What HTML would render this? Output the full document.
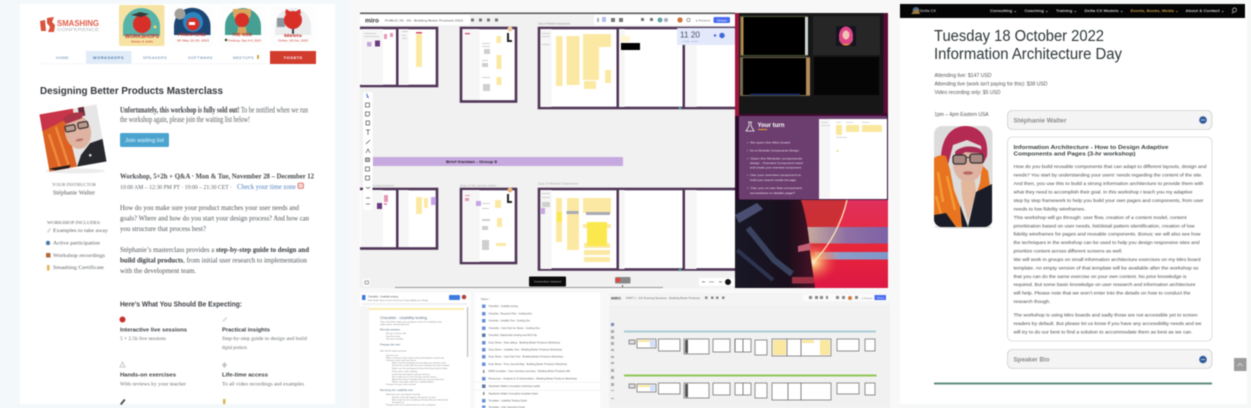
<!DOCTYPE html>
<html><head><meta charset="utf-8"><title>Workshops</title>
<style>
html,body{margin:0;padding:0;background:#f6f8f9;width:1251px;height:408px;overflow:hidden}
svg{display:block;filter:blur(.55px)}
text{white-space:pre}
.s{font-family:"Liberation Sans",sans-serif}
.f{font-family:"Liberation Serif",serif}
</style></head><body>
<svg width="1251" height="408" viewBox="0 0 1251 408" xmlns="http://www.w3.org/2000/svg">
<rect width="1251" height="408" fill="#f6f7f8"/>
<rect x="0" width="350" height="408" fill="#f3f8fa"/>

<!-- LEFT PANEL -->
<rect x="20" y="4" width="315" height="400" fill="#fff"/>
<path d="M40 21l5-1 1 11-5 0zM47 18l7-1-2 5 3 3-1 7-6 0 2-5-3-4z" fill="#d9533d"/>
<text class="s" x="57" y="26" font-size="8" font-weight="700" fill="#e0604c" textLength="42" lengthAdjust="spacingAndGlyphs">SMASHING</text>
<text class="s" x="57" y="31" font-size="4.6" fill="#aab0b5" textLength="42" lengthAdjust="spacingAndGlyphs">CONFERENCE</text>

<!-- card 1 -->
<rect x="119" y="5" width="45.500" height="41" rx="2" fill="#f6e3a4"/>
<path d="M123 36v-9.500a18.500 18.500 0 0 1 37 0v9.500z" fill="#58b3a9"/>
<circle cx="142" cy="24" r="9" fill="#d82f28"/>
<path d="M131 15l9-3 9 2-8 3z" fill="#3a3a3a"/>
<circle cx="155" cy="27" r="1.500" fill="#e8dc6a"/>
<text class="s" x="125" y="38" font-size="5.200" font-weight="700" fill="#c9352c" textLength="34" lengthAdjust="spacingAndGlyphs">WORKSHOPS</text>
<text class="s" x="131" y="42.500" font-size="2.600" fill="#c9352c" textLength="22" lengthAdjust="spacingAndGlyphs">Meets &amp; skills</text>

<!-- card 2 -->
<rect x="170" y="5" width="44" height="41" rx="2" fill="#fdfdfd"/>
<path d="M174 35v-9a18 18 0 0 1 36.500 0v9z" fill="#1c4674"/>
<circle cx="193" cy="22" r="10" fill="#2b86bf"/>
<circle cx="180" cy="14" r="5.500" fill="#a09f98"/>
<circle cx="193" cy="24" r="6.500" fill="#d82f28"/><rect x="189" y="22" width="6" height="3" fill="#fff"/>
<text class="s" x="178" y="36" font-size="4.600" font-weight="700" fill="#c9352c" textLength="28" lengthAdjust="spacingAndGlyphs">FRONTEND</text>
<text class="s" x="177" y="41.500" font-size="2.600" fill="#c9352c" textLength="32" lengthAdjust="spacingAndGlyphs">SF May 22-25, 2023</text>

<!-- card 3 -->
<rect x="220" y="5" width="45" height="41" rx="2" fill="#fdfdfd"/>
<path d="M225 35v-9a18 18 0 0 1 36 0v9z" fill="#459f93"/>
<path d="M233 9h18v6l-3 6h-12l-3-6z" fill="#d9a75f"/>
<circle cx="242" cy="20" r="7" fill="#d82f28"/>
<path d="M238 27h8l1 8h-10z" fill="#d9a75f"/>
<text class="s" x="232" y="36" font-size="4.600" font-weight="700" fill="#c9352c" textLength="20" lengthAdjust="spacingAndGlyphs">THE WEB</text>
<circle cx="226" cy="40" r="1.200" fill="#332"/>
<text class="s" x="228" y="41.500" font-size="2.600" fill="#c9352c" textLength="33" lengthAdjust="spacingAndGlyphs">Freiburg, Sep 4-6, 2023</text>

<!-- card 4 -->
<rect x="270" y="5" width="45" height="41" rx="2" fill="#fdfdfd"/>
<path d="M275 35v-9a18 18 0 0 1 36 0v9z" fill="#eaecee"/>
<rect x="277" y="18" width="8" height="9" fill="#8f979e"/>
<rect x="292" y="27" width="2" height="7" fill="#444"/>
<circle cx="293" cy="20" r="9" fill="#d82f28"/><path d="M285 14l1-5 5 3zM301 14l-1-5-5 3z" fill="#d82f28"/>
<text class="s" x="284" y="37" font-size="4.600" font-weight="700" fill="#c9352c" textLength="18" lengthAdjust="spacingAndGlyphs">Meets</text>
<text class="s" x="278" y="41.500" font-size="2.600" fill="#c9352c" textLength="30" lengthAdjust="spacingAndGlyphs">Online, 18 Oct, 2023</text>

<rect x="40" y="63.500" width="275" height=".6" fill="#eef1f4"/>
<rect x="86" y="51" width="45.500" height="13" fill="#e1ecf8"/>
<rect x="270" y="51" width="46" height="13" fill="#d23c2d"/>
<g class="s" font-size="3.800" letter-spacing=".5" fill="#5d7ea6">
<text x="56" y="59" textLength="13">HOME</text>
<text x="93" y="59" font-weight="700" textLength="31" fill="#4d78ad">WORKSHOPS</text>
<text x="143" y="59" textLength="24">SPEAKERS</text>
<text x="188" y="59" textLength="25">SOFTWARE</text>
<text x="233" y="59" textLength="21">MEETUPS</text>
<text x="283.500" y="59" font-weight="700" fill="#fff" textLength="19">TICKETS</text>
</g>
<rect x="257" y="55" width="2" height="4" fill="#cfa94f"/>

<text class="s" x="40" y="94" font-size="9.800" font-weight="700" fill="#33383d" textLength="183" lengthAdjust="spacingAndGlyphs">Designing Better Products Masterclass</text>

<!-- left portrait -->
<ellipse cx="75" cy="171" rx="30" ry="2.500" fill="#ececec"/>
<g transform="rotate(-10 73 138)">
<clipPath id="lp"><rect x="44" y="109" width="58" height="58"/></clipPath>
<g clip-path="url(#lp)">
<rect x="44" y="109" width="58" height="58" fill="#e6e6e6"/>
<path d="M44 109h34v16l-8 12 2 30H44z" fill="#dc6223"/>
<path d="M44 109h34l-2 7-12 4-20 6z" fill="#c8344a"/>
<path d="M50 130l5 34M58 124l6 40" stroke="#ee8a3a" stroke-width="2.500" fill="none"/>
<rect x="83" y="109" width="6" height="9" fill="#6b2c3a"/>
<ellipse cx="79" cy="133" rx="13" ry="17" fill="#dfb3a2"/>
<path d="M66 118c5-5 13-6 22-3l-3 5-16 3z" fill="#a93548"/>
<rect x="67" y="125" width="10" height="6" rx="1.500" fill="#b79a90" stroke="#38302f" stroke-width="1.200"/>
<rect x="80" y="124" width="10" height="6" rx="1.500" fill="#b79a90" stroke="#38302f" stroke-width="1.200"/>
<ellipse cx="79" cy="141" rx="4" ry="1.300" fill="#b97470"/>
<path d="M89 146l13-2v23H72l6-11z" fill="#26282d"/>
<circle cx="87" cy="158" r="1.300" fill="#ddd"/>
<path d="M44 164h22l-2 3H50z" fill="#2a1d1c"/>
</g></g>

<g class="f" font-size="8" fill="#555a5e">
<text x="120" y="112.500" textLength="188" lengthAdjust="spacingAndGlyphs"><tspan font-weight="700" fill="#3a3c40">Unfortunately, this workshop is fully sold out!</tspan> To be notified when we run</text>
<text x="120" y="122" textLength="130" lengthAdjust="spacingAndGlyphs">the workshop again, please join the waiting list below!</text>
</g>
<rect x="120" y="133" width="49" height="14" rx="1.500" fill="#4ba4d0"/>
<text class="s" x="125" y="142" font-size="5" fill="#eaf6fb" textLength="39" lengthAdjust="spacingAndGlyphs">Join waiting list</text>
<text class="f" x="120" y="178.500" font-size="7.500" font-weight="700" fill="#44484c" textLength="194" lengthAdjust="spacingAndGlyphs">Workshop, 5×2h + Q&amp;A · Mon &amp; Tue, November 28 – December 12</text>
<text class="f" x="120" y="189" font-size="6.500" fill="#60646a" textLength="112" lengthAdjust="spacingAndGlyphs">10:00 AM – 12:30 PM PT · 19:00 – 21:30 CET ·</text>
<text class="f" x="237" y="189" font-size="7" fill="#4d7fc0" textLength="59" lengthAdjust="spacingAndGlyphs">Check your time zone</text>
<rect x="298" y="183" width="5.500" height="5.500" rx="1.500" fill="#f2d6d2" stroke="#d9675c" stroke-width=".8"/>

<text class="f" x="52" y="186" font-size="4.200" fill="#6c7076" textLength="44" lengthAdjust="spacingAndGlyphs">YOUR INSTRUCTOR</text>
<text class="f" x="53" y="194.500" font-size="6" fill="#55595e" textLength="42" lengthAdjust="spacingAndGlyphs">Stéphanie Walter</text>

<g class="f" font-size="7.800" fill="#4d5156">
<text x="120" y="210" textLength="179" lengthAdjust="spacingAndGlyphs">How do you make sure your product matches your user needs and</text>
<text x="120" y="220.500" textLength="189" lengthAdjust="spacingAndGlyphs">goals? Where and how do you start your design process? And how can</text>
<text x="120" y="231" textLength="86" lengthAdjust="spacingAndGlyphs">you structure that process best?</text>
<text x="120" y="252" textLength="189" lengthAdjust="spacingAndGlyphs">Stéphanie’s masterclass provides a <tspan font-weight="700" fill="#36393d">step-by-step guide to design and</tspan></text>
<text x="120" y="262.500" textLength="187" lengthAdjust="spacingAndGlyphs"><tspan font-weight="700" fill="#36393d">build digital products</tspan>, from initial user research to implementation</text>
<text x="120" y="273" textLength="76" lengthAdjust="spacingAndGlyphs">with the development team.</text>
</g>

<g class="f" font-size="5.600" fill="#5d6167">
<text x="47" y="224" font-size="4.400" textLength="54" lengthAdjust="spacingAndGlyphs">WORKSHOP INCLUDES:</text>
<text x="53" y="232" textLength="55" lengthAdjust="spacingAndGlyphs">Examples to take away</text>
<text x="53" y="244.500" textLength="47" lengthAdjust="spacingAndGlyphs">Active participation</text>
<text x="53" y="257" textLength="52" lengthAdjust="spacingAndGlyphs">Workshop recordings</text>
<text x="53" y="269" textLength="51" lengthAdjust="spacingAndGlyphs">Smashing Certificate</text>
</g>
<path d="M47 232l3-4 1 1-3 4z" fill="#ccc"/>
<circle cx="48" cy="243" r="2.200" fill="#4a78a8"/>
<rect x="46" y="253" width="4.500" height="4.500" fill="#b5673a"/>
<rect x="47" y="265" width="2.500" height="5.500" fill="#e0b35a"/>

<text class="s" x="120" y="306.500" font-size="7" font-weight="700" fill="#3b3f44" textLength="122" lengthAdjust="spacingAndGlyphs">Here’s What You Should Be Expecting:</text>
<circle cx="122.500" cy="319.500" r="3" fill="#cc2f2b"/>
<path d="M222 321l4-4 1.500 1-4 4z" fill="#ddd"/>
<path d="M122.500 362l2.500 5h-5z" fill="none" stroke="#c8c8c8" stroke-width="1"/>
<path d="M224.500 362l2.500 3-2.500 3-2.500-3z" fill="#bfc4c4"/>
<path d="M120 404l4-5 1.500 1-4 5z" fill="#444"/>
<rect x="223" y="399" width="2.500" height="5" fill="#dcb453"/>
<g class="s" font-size="5.800" font-weight="700" fill="#3d4145">
<text x="120" y="331.500" textLength="67" lengthAdjust="spacingAndGlyphs">Interactive live sessions</text>
<text x="222" y="331.500" textLength="48" lengthAdjust="spacingAndGlyphs">Practical insights</text>
<text x="120" y="376.500" textLength="56" lengthAdjust="spacingAndGlyphs">Hands-on exercises</text>
<text x="222" y="376.500" textLength="46" lengthAdjust="spacingAndGlyphs">Life-time access</text>
</g>
<g class="f" font-size="5.300" fill="#6a6e73">
<text x="120" y="340" textLength="46" lengthAdjust="spacingAndGlyphs">5 × 2.5h live sessions</text>
<text x="222" y="340" textLength="85" lengthAdjust="spacingAndGlyphs">Step-by-step guide to design and build</text>
<text x="222" y="349" textLength="25" lengthAdjust="spacingAndGlyphs">digital products</text>
<text x="120" y="385.500" textLength="66" lengthAdjust="spacingAndGlyphs">With reviews by your teacher</text>
<text x="222" y="385.500" textLength="82" lengthAdjust="spacingAndGlyphs">To all video recordings and examples</text>
</g>

<!-- MIDDLE -->
<rect x="350" y="0" width="550" height="408" fill="#f8f8f8"/>
<clipPath id="bd"><rect x="360" y="13" width="375" height="275"/></clipPath>
<rect x="360" y="13" width="375" height="275" fill="#f1f1f1"/>
<g clip-path="url(#bd)">
<g fill="#fff" stroke="#4e3456" stroke-width="2.600">
<rect x="352" y="28" width="85" height="58"/>
<rect x="461" y="28" width="55" height="73.500"/>
<rect x="539" y="28" width="210" height="80"/>
<rect x="352" y="189" width="85" height="59.500"/>
<rect x="461" y="189" width="55" height="74"/>
<rect x="539" y="189" width="210" height="80.500"/>
</g>
<g fill="#f6f6f6">
<rect x="361" y="29" width="22" height="56"/><rect x="398.500" y="29" width="10" height="56"/>
<rect x="462.500" y="29" width="17" height="71"/>
<rect x="540.500" y="29" width="11" height="78"/><rect x="618.500" y="29" width="6" height="78"/><rect x="684.500" y="29" width="12" height="78"/>
<rect x="361" y="190" width="22" height="57"/><rect x="398.500" y="190" width="10" height="57"/>
<rect x="462.500" y="190" width="17" height="72"/>
<rect x="540.500" y="190" width="11" height="79"/><rect x="618.500" y="190" width="6" height="79"/><rect x="684.500" y="190" width="12" height="79"/>
</g>
<g fill="#4e3456">
<rect x="396" y="28" width="2.500" height="58"/><rect x="616.500" y="28" width="2.500" height="80"/><rect x="682.500" y="44" width="2.500" height="64"/>
<rect x="396" y="189" width="2.500" height="60"/><rect x="616.500" y="189" width="2.500" height="81"/><rect x="682.500" y="189" width="2.500" height="81"/>
</g>
<!-- stickies top -->
<g fill="#fbe9a3">
<rect x="416" y="34" width="6" height="33"/>
<rect x="496.500" y="36" width="4.500" height="7"/><rect x="496.500" y="55" width="5" height="14"/><rect x="496.500" y="77" width="5" height="8"/>
<rect x="556" y="36" width="6.500" height="50"/><rect x="566.500" y="36" width="13" height="49"/>
<rect x="583" y="34" width="28" height="13"/><rect x="583" y="47" width="16" height="33"/><rect x="605" y="70" width="6" height="13"/><rect x="584" y="81" width="12" height="8"/>
<rect x="621" y="36" width="9" height="6" fill="#fff6cf"/>
<rect x="556" y="198" width="6" height="44"/><rect x="567" y="198" width="12" height="52"/>
<rect x="583" y="198" width="28" height="15"/><rect x="583" y="224" width="28" height="4"/><rect x="584" y="243" width="26" height="5"/><rect x="584" y="250" width="26" height="5"/><rect x="584" y="257" width="26" height="5"/>
<rect x="416" y="197" width="6" height="17"/><rect x="424" y="198" width="4" height="10"/><rect x="495" y="200" width="6" height="8"/><rect x="497" y="218" width="5" height="9"/><rect x="496" y="243" width="10" height="3"/>
</g>
<rect x="587" y="222" width="20" height="24" fill="#fbe84f"/>
<rect x="557" y="212" width="5" height="10" fill="#fbe84f"/>
<rect x="566.500" y="211" width="12" height="3" fill="#a9a9b7"/><rect x="586" y="212" width="24" height="3" fill="#a9a9b7"/>
<rect x="621" y="43" width="19" height="7" fill="#000"/>
<g fill="#e49ab5">
<rect x="384" y="34" width="3" height="5"/><rect x="390" y="33" width="3" height="4"/><rect x="384" y="195" width="4" height="7"/><rect x="384" y="203" width="3" height="2"/><rect x="465" y="195" width="5" height="1"/><rect x="465" y="198" width="4" height="3"/>
</g>
<rect x="416" y="32" width="6" height="1.500" fill="#d54464"/>
<rect x="465" y="33" width="5" height="1.200" fill="#d54464"/>
<rect x="367" y="42" width="4.500" height="4.500" fill="#c5a5dd"/><rect x="375" y="40.500" width="5" height="6" fill="#6a3a80"/>
<rect x="377" y="203" width="5" height="6" fill="#6a3a80"/><rect x="431" y="197" width="5" height="8" fill="#c5a5e6"/><rect x="476" y="201" width="5" height="5" fill="#c5a5e6"/><rect x="541" y="208" width="4" height="6" fill="#c5a5e6"/>
<!-- grey mini lines -->
<g fill="#cfcfcf">
<rect x="364" y="33" width="12" height="1"/><rect x="364" y="36" width="15" height="1"/><rect x="402" y="31" width="6" height="1"/><rect x="402" y="35" width="4" height="1"/><rect x="402" y="38" width="5" height="1"/>
<rect x="482" y="43" width="8" height="1"/><rect x="482" y="46" width="8" height="1"/><rect x="484" y="49" width="6" height="5"/><rect x="482" y="60" width="6" height="1"/><rect x="482" y="63" width="6" height="4"/><rect x="482" y="77" width="8" height="1"/><rect x="483" y="84" width="7" height="7"/>
<rect x="542" y="33" width="8" height="1"/><rect x="542" y="36" width="8" height="1"/><rect x="542" y="44" width="8" height="1"/>
<rect x="482" y="203" width="8" height="1"/><rect x="482" y="208" width="7" height="1"/><rect x="482" y="219" width="8" height="2"/><rect x="482" y="226" width="6" height="4"/><rect x="482" y="240" width="7" height="10"/>
<rect x="542" y="193" width="8" height="1"/><rect x="542" y="197" width="8" height="1"/><rect x="542" y="202" width="8" height="5"/>
</g>
<path d="M507 33h2v7h3v2h-5z" fill="#222"/><circle cx="510" cy="29" r="2.500" fill="#eecba4"/>
<path d="M507 194h2v7h3v2h-5z" fill="#222"/><circle cx="510" cy="190" r="2.500" fill="#e7b27e"/>
<!-- band -->
<rect x="373" y="157" width="250" height="9" fill="#c6a9de"/>
<text class="s" x="446" y="163" font-size="3.400" font-weight="700" fill="#2d2235" textLength="51" lengthAdjust="spacingAndGlyphs">Brief Kanban - Group 8</text>
<!-- frame labels -->
<g class="s" font-size="2.300" fill="#888">
<text x="538" y="24.500" textLength="32">Copy of Modular Components</text>
<text x="372" y="186.500" textLength="22">Communication</text>
<text x="460" y="186.500" textLength="36">Copy of the content model</text>
<text x="538" y="184.500" textLength="40">Copy of Modular Components</text>
</g>
<!-- top bar -->
<rect x="360" y="15" width="110" height="10" rx="1" fill="#fff"/>
<rect x="594" y="15" width="141" height="10" rx="1" fill="#fff"/>
<text class="s" x="365" y="22.500" font-size="6" font-weight="700" fill="#333" textLength="14" lengthAdjust="spacingAndGlyphs">miro</text>
<text class="s" x="385" y="21.500" font-size="2.800" fill="#555" textLength="78" lengthAdjust="spacingAndGlyphs">PUBLIC 03 - 04 - Building Better Products 2022</text>
<g fill="#777"><rect x="471" y="18.500" width="3" height="3"/><rect x="479" y="18.500" width="3" height="3"/><rect x="487" y="18.500" width="3" height="3"/><rect x="495" y="18.500" width="3" height="3"/></g>
<g fill="#777">
<rect x="597" y="18" width="2" height="4" fill="#aab"/><rect x="602" y="17" width="4" height="5" fill="#b5c0ea"/><rect x="611" y="18" width="4" height="4"/><rect x="619" y="18" width="4" height="4"/>
<rect x="641" y="18" width="3" height="3"/><rect x="650" y="18" width="3" height="3"/>
<circle cx="660" cy="20" r="2.500" fill="#5fa7a5"/><circle cx="666" cy="20" r="2" fill="#aab"/><circle cx="680" cy="20" r="2.700" fill="#d0763a"/><circle cx="688.500" cy="20" r="1.700" fill="none" stroke="#777" stroke-width=".6"/>
</g>
<text class="s" x="696" y="21.500" font-size="3" fill="#666" textLength="14" lengthAdjust="spacingAndGlyphs">▸ Present</text>
<rect x="713.500" y="17" width="16.500" height="6" rx="1" fill="#4a6cf2"/>
<text class="s" x="717" y="21.500" font-size="2.800" fill="#fff" textLength="10" lengthAdjust="spacingAndGlyphs">Share</text>
<!-- timer -->
<rect x="677" y="28" width="58" height="17" rx="1" fill="#e3e9fa"/>
<text class="s" x="680" y="37.500" font-size="8.500" fill="#46506a" textLength="20" lengthAdjust="spacingAndGlyphs">11 20</text>
<text class="s" x="682" y="42" font-size="2.200" fill="#6a7fc7" textLength="16">+1 min  +5 min</text>
<circle cx="722" cy="35.500" r="2.700" fill="#3f68dc"/><circle cx="715" cy="35.500" r="1.200" fill="#3f68dc"/>
<!-- left toolbar -->
<rect x="363" y="92" width="9.500" height="118" rx="2" fill="#fff"/>
<g fill="none" stroke="#555" stroke-width=".7">
<path d="M366.500 93.500l2 4-1 0-1-4z" fill="#5578d8" stroke="#5578d8"/>
<rect x="365.500" y="103" width="4" height="4"/><path d="M365.500 112h4v3l-1 1h-3z"/><path d="M366 121h3.500v4H366z"/><path d="M366 130h4M368 130v5"/><path d="M366 144l4-4"/><path d="M366 153l2-4 2 4"/><rect x="365.500" y="158" width="4" height="3.500" fill="#bbb"/><rect x="365.500" y="167" width="4" height="4"/><rect x="365.500" y="176" width="4" height="4"/>
<path d="M366 187l2 1.500 2-1.500"/><path d="M366 198h4"/><path d="M366 204h4"/>
</g>
<!-- bottom -->
<rect x="363" y="279" width="7" height="7" fill="#fff"/><rect x="365" y="281" width="3.500" height="3" fill="none" stroke="#666" stroke-width=".6"/>
<rect x="529" y="276.500" width="37" height="10" rx="1" fill="#0b0b0b"/>
<text class="s" x="534" y="282.500" font-size="2.800" fill="#bbb" textLength="27" lengthAdjust="spacingAndGlyphs">Connection restored</text>
<rect x="615" y="277" width="15.500" height="6.500" rx="1" fill="#888"/><circle cx="618" cy="280" r="2.500" fill="#e0463f"/>
<rect x="622" y="285" width="1" height="2" fill="#555"/>
<rect x="699" y="278" width="36" height="8" fill="#fff"/>
<rect x="702" y="281.500" width="3" height=".7" fill="#555"/><rect x="709" y="281.500" width="5" height=".7" fill="#888"/><rect x="719" y="281.500" width="3" height=".7" fill="#555"/><circle cx="728" cy="282" r="3" fill="#111"/>
<rect x="395" y="287" width="268" height="1" fill="#999"/>
<circle cx="680" cy="108" r="1.300" fill="#4fa58f"/><circle cx="680" cy="270" r="1.300" fill="#4fa58f"/>
</g>
<rect x="360" y="12.500" width="375" height="1.500" fill="#585858"/>
<rect x="360" y="288" width="530" height="4" fill="#f8f8f8"/>

<!-- video -->
<defs>
<linearGradient id="vb" x1="0" y1="0" x2="0" y2="1"><stop offset="0" stop-color="#e0305e"/><stop offset=".5" stop-color="#e8283a"/><stop offset="1" stop-color="#de1745"/></linearGradient>
<linearGradient id="st" x1="0" y1="0" x2="1" y2="0"><stop offset="0" stop-color="#c9ad9c"/><stop offset=".5" stop-color="#8f6fa4"/><stop offset="1" stop-color="#7d62a6"/></linearGradient>
<linearGradient id="st2" x1="0" y1="0" x2="1" y2="0"><stop offset="0" stop-color="#d8c0a8"/><stop offset=".35" stop-color="#8d9dc8"/><stop offset="1" stop-color="#7d98c8"/></linearGradient>
<radialGradient id="gl"><stop offset="0" stop-color="#fff3c8"/><stop offset=".25" stop-color="#f8b070" stop-opacity=".9"/><stop offset="1" stop-color="#e8283a" stop-opacity="0"/></radialGradient>
<linearGradient id="hm" x1="0" y1="0" x2="1" y2="0"><stop offset="0" stop-color="#181826"/><stop offset=".65" stop-color="#1a0f1c"/><stop offset="1" stop-color="#4a1226"/></linearGradient>
<clipPath id="vc"><rect x="735" y="13" width="153" height="275"/></clipPath>
</defs>
<g clip-path="url(#vc)">
<rect x="735" y="13" width="153" height="275" fill="#420a30"/>
<rect x="735" y="13" width="4" height="110" fill="#a1153e"/>
<rect x="884" y="13" width="4" height="100" fill="#5b0d35"/>
<rect x="739" y="13" width="144" height="101" fill="#171717"/>
<rect x="740" y="16" width="68" height="40" fill="#4c5a3a"/>
<rect x="742.500" y="17" width="63" height="38" fill="#000"/>
<rect x="741" y="17" width="2.500" height="38" fill="#b58a4c"/>
<rect x="805" y="17" width="3" height="38" fill="#cfd6d0"/>
<rect x="813" y="16" width="67" height="39" fill="#262626"/>
<rect x="836" y="26" width="20" height="20" fill="#161220"/>
<ellipse cx="846" cy="36" rx="7" ry="9.500" fill="#e0478a"/>
<path d="M839 38c0 10 14 10 14 0l-2 6h-10z" fill="#f09a2e"/>
<ellipse cx="846" cy="35" rx="3.500" ry="4.500" fill="#f0c4b4"/>
<rect x="740" y="57" width="70" height="39" fill="#77694a"/>
<rect x="743" y="58" width="63" height="37" fill="#000"/>
<rect x="806" y="58" width="4" height="37" fill="#b48c58"/>
<rect x="750" y="93.500" width="50" height="2" fill="#182a5a"/>
<rect x="814" y="57" width="65" height="38" fill="#050505"/>
<rect x="735" y="116" width="153" height="84" fill="#2a0a2a"/>
<rect x="739" y="116" width="148" height="83.500" rx="1" fill="#6c3e6f"/>
<rect x="819" y="119" width="68" height="80" fill="#fff"/>
<rect x="819" y="119" width="11" height="80" fill="#f6f6f6"/>
<rect x="836" y="125" width="6" height="10" fill="#f9e79d"/><rect x="846" y="125" width="13" height="7" fill="#f9e79d"/><rect x="862" y="125" width="20" height="7" fill="#f9e79d"/><circle cx="837.500" cy="151" r="1" fill="#e6dd7a"/>
<g fill="#cfcfcf"><rect x="821" y="122" width="7" height=".8"/><rect x="821" y="125" width="9" height=".8"/><rect x="836" y="122" width="5" height=".8"/><rect x="846" y="122" width="7" height=".8"/><rect x="862" y="122" width="7" height=".8"/><rect x="836" y="137" width="11" height=".8"/></g>
<path d="M748 122h4M749 122v4l-3 5h8l-3-5v-4" fill="none" stroke="#eee" stroke-width=".8"/>
<text class="s" x="757.500" y="127" font-size="6.200" font-weight="700" fill="#fff" textLength="27" lengthAdjust="spacingAndGlyphs">Your turn</text>
<rect x="758" y="129" width="9" height="1" fill="#e8a43a"/>
<g class="s" font-size="3" fill="#ecdfee">
<text x="747" y="143.500" textLength="43" lengthAdjust="spacingAndGlyphs">•  Re-open the Miro board</text>
<text x="747" y="151.500" textLength="52" lengthAdjust="spacingAndGlyphs">•  Go to Modular Components Design</text>
<text x="747" y="159.500" textLength="55" lengthAdjust="spacingAndGlyphs">•  Open the Modular components</text>
<text x="750" y="164" textLength="53" lengthAdjust="spacingAndGlyphs">design - Overview Component insert</text>
<text x="750" y="168.500" textLength="51" lengthAdjust="spacingAndGlyphs">and create your overview component</text>
<text x="747" y="176" textLength="54" lengthAdjust="spacingAndGlyphs">•  Use your overview component to</text>
<text x="750" y="181" textLength="46" lengthAdjust="spacingAndGlyphs">build your search results list page</text>
<text x="747" y="189" textLength="55" lengthAdjust="spacingAndGlyphs">•  Can you re-use that component</text>
<text x="750" y="194" textLength="45" lengthAdjust="spacingAndGlyphs">somewhere in details page?</text>
</g>
<rect x="735" y="200" width="153" height="88" fill="url(#vb)"/>
<path d="M800 200h47c-5 16-14 34-32 50z" fill="#c4322e" opacity=".75"/>
<rect x="806" y="227" width="82" height="16.500" fill="url(#st)"/>
<rect x="815" y="252" width="73" height="7.500" fill="url(#st2)"/>
<ellipse cx="813" cy="262" rx="26" ry="22" fill="url(#gl)"/>
<path d="M847 200c-5 22-17 47-37 65" stroke="#ffe9b0" stroke-width="1.300" fill="none"/>
<path d="M735 200h66c5 16 8 34 9 52l5 36h-80z" fill="url(#hm)"/>
<path d="M735 215l22-12 6 6-24 14z" fill="#4a4f72"/>
<path d="M748 228l26 32 18 14" stroke="#39425e" stroke-width="6" fill="none"/>
<path d="M737 250l36 30" stroke="#2d3450" stroke-width="4" fill="none"/>
<path d="M798 246l12-3 1 7-13 2z" fill="#c26076"/>
<rect x="792" y="277" width="22" height="6.500" fill="#9d3245"/>
</g>

<!-- lower doc panel -->
<rect x="360" y="293" width="110" height="115" fill="#fff"/>
<rect x="362" y="295" width="3.500" height="5" fill="#3d7be0"/>
<text class="s" x="368" y="297.500" font-size="2.600" fill="#555" textLength="30" lengthAdjust="spacingAndGlyphs">Checklist - Usability testing</text>
<text class="s" x="368" y="301" font-size="1.900" fill="#777" textLength="60" lengthAdjust="spacingAndGlyphs">File Edit View Insert Format Tools Add-ons Help</text>
<rect x="449" y="295" width="11" height="5" rx="1" fill="#3d7be0"/>
<circle cx="464" cy="297" r="2.300" fill="#b0453a"/>
<rect x="362" y="303" width="105" height="2" fill="#eef0f3"/>
<rect x="369" y="308" width="95" height="2" fill="#f8ebb0"/>
<rect x="467" y="307" width="1.200" height="50" fill="#bbb"/>
<rect x="360" y="306" width="9" height="102" fill="#f5f5f5"/>
<text class="s" x="380" y="319" font-size="4" fill="#5c6f88" textLength="47" lengthAdjust="spacingAndGlyphs">Checklist - Usability testing</text>
<g class="s" font-size="2" fill="#777">
<text x="380" y="322.500" textLength="62" lengthAdjust="spacingAndGlyphs">This checklist helps you prepare and run usability tests</text>
<text x="380" y="325" textLength="30" lengthAdjust="spacingAndGlyphs">with your participants.</text>
<text x="380" y="330.500" font-size="2.600" fill="#5c6f88" textLength="20" lengthAdjust="spacingAndGlyphs">Remote session</text>
<text x="386" y="334" textLength="20" lengthAdjust="spacingAndGlyphs">Set up a tool for calls</text>
<text x="386" y="337" textLength="14" lengthAdjust="spacingAndGlyphs">Send the invite</text>
<text x="386" y="339.500" textLength="17" lengthAdjust="spacingAndGlyphs">Test your recording</text>
<text x="380" y="345.500" font-size="2.600" fill="#5c6f88" textLength="20" lengthAdjust="spacingAndGlyphs">Prepare the test</text>
<text x="380" y="351.500" textLength="26" lengthAdjust="spacingAndGlyphs">Start with the goals you need</text>
<text x="386" y="356" textLength="12" lengthAdjust="spacingAndGlyphs">Define the scope</text>
<text x="386" y="358.500" textLength="58" lengthAdjust="spacingAndGlyphs">Write scenarios that match what participants need to do</text>
<text x="386" y="361" textLength="30" lengthAdjust="spacingAndGlyphs">Choose tasks and test them</text>
<text x="392" y="363.500" textLength="54" lengthAdjust="spacingAndGlyphs">Make sure the prototype has the pages you need for tasks</text>
<text x="392" y="366" textLength="57" lengthAdjust="spacingAndGlyphs">Review the script with the team and plan the time needed</text>
<text x="392" y="369" textLength="55" lengthAdjust="spacingAndGlyphs">Make sure the participants know what they need to bring</text>
<text x="392" y="372" textLength="25" lengthAdjust="spacingAndGlyphs">Plan your note taking</text>
<text x="392" y="375" textLength="38" lengthAdjust="spacingAndGlyphs">Decide who will moderate and who observes</text>
<text x="392" y="377.500" textLength="44" lengthAdjust="spacingAndGlyphs">Run a pilot test to check the flow and the timing</text>
<text x="392" y="380" textLength="52" lengthAdjust="spacingAndGlyphs">Adjust the tasks if needed after you ran your pilot test</text>
<text x="392" y="382.500" textLength="42" lengthAdjust="spacingAndGlyphs">Share the plan with the stakeholders</text>
<text x="386" y="385" textLength="30" lengthAdjust="spacingAndGlyphs">Prepare for your next session</text>
<text x="380" y="391" font-size="2.600" fill="#5c6f88" textLength="33" lengthAdjust="spacingAndGlyphs">Running the usability test</text>
<text x="386" y="395" textLength="34" lengthAdjust="spacingAndGlyphs">Welcome your participant warmly</text>
<text x="392" y="398" textLength="44" lengthAdjust="spacingAndGlyphs">Explain what will happen during the session</text>
<text x="392" y="400.500" textLength="56" lengthAdjust="spacingAndGlyphs">Ask consent for the recording and remind them to think aloud</text>
<text x="392" y="403" textLength="12" lengthAdjust="spacingAndGlyphs">and speak up</text>
<text x="386" y="405.500" textLength="50" lengthAdjust="spacingAndGlyphs">Prepare the test environment on the computer</text>
</g>

<!-- lower list panel -->
<rect x="475" y="293" width="125" height="115" fill="#fff"/>
<text class="s" x="481" y="300" font-size="2.800" fill="#666" textLength="9" lengthAdjust="spacingAndGlyphs">Name ↑</text>
<rect x="475" y="382" width="125" height=".5" fill="#e8e8e8"/><rect x="475" y="390" width="125" height=".5" fill="#e8e8e8"/>
<g fill="#6a8fd8">
<rect x="482" y="304.500" width="3.500" height="3.500"/><rect x="482" y="312" width="3.500" height="3.500"/><rect x="482" y="319" width="3.500" height="3.500"/><rect x="482" y="326.500" width="3.500" height="3.500"/><rect x="482" y="333.500" width="3.500" height="3.500" fill="#5b76a8"/><rect x="482" y="341" width="3.500" height="3.500"/><rect x="482" y="348" width="3.500" height="3.500"/><rect x="482" y="355" width="3.500" height="3.500"/><rect x="482" y="362.500" width="3.500" height="3.500"/><rect x="483" y="370" width="1.500" height="3" fill="#888"/><rect x="482" y="377" width="3.500" height="3.500"/><rect x="482" y="384.500" width="3.500" height="3.500" fill="#5b76a8"/><rect x="483" y="392" width="1.500" height="3" fill="#888"/><rect x="482" y="399" width="3.500" height="3.500"/><rect x="482" y="405.500" width="3.500" height="2.500"/>
</g>
<g class="s" font-size="2.500" fill="#666">
<text x="488.500" y="307" textLength="29.500" lengthAdjust="spacingAndGlyphs">Checklist - Usability testing</text>
<text x="488.500" y="314.500" textLength="43.500" lengthAdjust="spacingAndGlyphs">Checklist - Research Plan - Guiding Doc</text>
<text x="488.500" y="321.500" textLength="41.500" lengthAdjust="spacingAndGlyphs">Checklist - Usability Test - Guiding Doc</text>
<text x="488.500" y="329" textLength="51.500" lengthAdjust="spacingAndGlyphs">Checklist - Card Sort for Study - Guiding Doc</text>
<text x="488.500" y="336" textLength="48.500" lengthAdjust="spacingAndGlyphs">Checklist: Stakeholder briefing and RACI file</text>
<text x="488.500" y="343.500" textLength="71.500" lengthAdjust="spacingAndGlyphs">Duty Sheet - Note taking - Building Better Products Workshop</text>
<text x="488.500" y="350.500" textLength="73.500" lengthAdjust="spacingAndGlyphs">Duty Sheet - Usability Test - Building Better Products Workshop</text>
<text x="488.500" y="357.500" textLength="74.500" lengthAdjust="spacingAndGlyphs">Duty Sheet - Card Sort Test - Building Better Products Workshop</text>
<text x="488.500" y="365" textLength="78.500" lengthAdjust="spacingAndGlyphs">Duty Sheet - Time Journal Map - Building Better Products Workshop</text>
<text x="488.500" y="372" textLength="81.500" lengthAdjust="spacingAndGlyphs">MIRO template - User interview summary - Building Better Products Wk</text>
<text x="488.500" y="379.500" textLength="88.500" lengthAdjust="spacingAndGlyphs">Resources - Analysis &amp; UI Deliverables - Building Better Products Workshop</text>
<text x="488.500" y="387" textLength="51.500" lengthAdjust="spacingAndGlyphs">Stephanie Walter Innovation workshop toolkit</text>
<text x="488.500" y="394.500" textLength="49.500" lengthAdjust="spacingAndGlyphs">Stephanie Walter Innovation template board</text>
<text x="488.500" y="401.500" textLength="38.500" lengthAdjust="spacingAndGlyphs">Template - Usability Testing Guide</text>
<text x="488.500" y="408" textLength="36.500" lengthAdjust="spacingAndGlyphs">Template - User Interview Guide</text>
</g>

<!-- lower miro panel -->
<rect x="609" y="293" width="281" height="115" fill="#f1f1f1"/>
<rect x="609" y="293" width="281" height="12" fill="#f4f4f4"/>
<text class="s" x="611" y="299.500" font-size="3.500" font-weight="700" fill="#444" textLength="10" lengthAdjust="spacingAndGlyphs">MIRO</text>
<text class="s" x="626" y="299" font-size="2.300" fill="#666" textLength="74" lengthAdjust="spacingAndGlyphs">PART 1 - 101 Running Sessions - Building Better Products</text>
<g fill="#888"><rect x="705" y="296.500" width="2.500" height="2.500"/><rect x="711" y="296.500" width="2.500" height="2.500"/><rect x="716" y="296.500" width="2.500" height="2.500"/><rect x="722" y="296.500" width="2.500" height="2.500"/></g>
<rect x="803" y="294" width="86" height="7" fill="#fbfbfb"/>
<g fill="#888"><rect x="809" y="296" width="3" height="3"/><rect x="815" y="296" width="3" height="3"/><rect x="820" y="296" width="3" height="3"/><rect x="826" y="296" width="2" height="3"/><rect x="836" y="296" width="3" height="3"/><rect x="842" y="296" width="3" height="3"/><circle cx="850" cy="298" r="2" fill="#d5793a"/><rect x="855" y="296" width="3" height="3"/></g>
<text class="s" x="862" y="299" font-size="2" fill="#666" textLength="10" lengthAdjust="spacingAndGlyphs">▸ Present</text>
<rect x="874.500" y="295" width="11.500" height="5" fill="#4a6cf2"/>
<text class="s" x="877" y="298.500" font-size="2" fill="#fff" textLength="7" lengthAdjust="spacingAndGlyphs">Share</text>
<g fill="#7c86b8"><rect x="611" y="323" width="3" height="3"/></g>
<g fill="#aaa"><rect x="611" y="330" width="3" height="3"/><rect x="611" y="336" width="3" height="3"/><rect x="611" y="342" width="3" height="3"/><rect x="611" y="349" width="3" height="2"/><rect x="611" y="356" width="3" height="2"/><rect x="611" y="362" width="3" height="2"/><rect x="611" y="369" width="3" height="3"/><rect x="611" y="376" width="3" height="3"/><rect x="611" y="383" width="3" height="3"/><rect x="611" y="390" width="3" height="1"/><rect x="611" y="398" width="3" height="1"/></g>
<rect x="624" y="330.500" width="252" height="2" fill="#a9cdd6"/>
<rect x="624" y="374.500" width="252.500" height="2" fill="#8fc655"/>
<g fill="#fff" stroke="#777" stroke-width=".8">
<rect x="629" y="340" width="6" height="4" fill="#ddd"/>
<rect x="637" y="339" width="19" height="9"/>
<rect x="658.500" y="339" width="21.500" height="12"/>
<rect x="684" y="339" width="25" height="15"/>
<rect x="713" y="339" width="17" height="13"/>
<rect x="735" y="339" width="16" height="13"/>
<rect x="755" y="340" width="12" height="15"/>
<rect x="772" y="339" width="59" height="17"/>
<rect x="837" y="339" width="22" height="12"/>
<rect x="865" y="339" width="10" height="12"/>
<rect x="629" y="384" width="6" height="4" fill="#ddd"/>
<rect x="637" y="384" width="19" height="8"/>
<rect x="658.500" y="383" width="21.500" height="11"/>
<rect x="684" y="383" width="25" height="15"/>
<rect x="713" y="383" width="17" height="12"/>
<rect x="735" y="383" width="16" height="12"/>
<rect x="755" y="383" width="12" height="15"/>
<rect x="772" y="383" width="59" height="17"/>
<rect x="837" y="383" width="22" height="11"/>
<rect x="865" y="383" width="10" height="12"/>
</g>
<g fill="#fae7a0"><rect x="773" y="340" width="13" height="15"/><rect x="820" y="340" width="10" height="15"/><rect x="802" y="340" width="12" height="3"/></g>
<rect x="650" y="340" width="5" height="7" fill="#cfe0fa"/><rect x="638" y="340" width="12" height="2" fill="#fae7a0"/>
<rect x="650" y="385" width="5" height="6" fill="#cfe0fa"/><rect x="638" y="385" width="12" height="2" fill="#fae7a0"/>
<g stroke="#666" stroke-width=".8"><path d="M687 339v15M687 383v15M735 339v13M743 339v13M787 339v17M801 339v17M743 383v12M788 383v17M801 383v17"/></g>
<rect x="685" y="340" width="3" height="13" fill="#555"/><rect x="685" y="384" width="3" height="13" fill="#555"/>

<!-- RIGHT -->
<rect x="900" y="4" width="347" height="400" fill="#fff"/>
<rect x="900" y="4" width="345" height="14" fill="#050505"/>
<circle cx="916" cy="10.500" r="3.500" fill="#4a6a8a"/><path d="M911 14h9l-2-5-3 1z" fill="#a07a3a"/>
<text class="s" x="920" y="12" font-size="3.800" font-weight="700" fill="#aaa" textLength="16" lengthAdjust="spacingAndGlyphs">Delta CX</text>
<g class="s" font-size="4" font-weight="700" fill="#c8c8c8">
<text x="990" y="12" textLength="27" lengthAdjust="spacingAndGlyphs">Consulting ⌄</text>
<text x="1024.500" y="12" textLength="24" lengthAdjust="spacingAndGlyphs">Coaching ⌄</text>
<text x="1056" y="12" textLength="21" lengthAdjust="spacingAndGlyphs">Training ⌄</text>
<text x="1084.500" y="12" textLength="39" lengthAdjust="spacingAndGlyphs">Delta CX Models ⌄</text>
<text x="1130.500" y="12" textLength="48" lengthAdjust="spacingAndGlyphs" fill="#c99a48">Events, Books, Media ⌄</text>
<text x="1185.500" y="12" textLength="39" lengthAdjust="spacingAndGlyphs">About &amp; Contact ⌄</text>
</g>
<circle cx="1234.500" cy="10" r="2" fill="none" stroke="#ccc" stroke-width=".7"/><path d="M1233 12l-1 1.500" stroke="#ccc" stroke-width=".7"/>
<g class="s" font-size="15.500" fill="#2d3538">
<text x="934" y="41" textLength="170" lengthAdjust="spacingAndGlyphs">Tuesday 18 October 2022</text>
<text x="934" y="59" textLength="188" lengthAdjust="spacingAndGlyphs">Information Architecture Day</text>
</g>
<g class="s" font-size="5" fill="#555">
<text x="934.500" y="77" textLength="57" lengthAdjust="spacingAndGlyphs">Attending live: $147 USD</text>
<text x="934.500" y="85.500" textLength="113" lengthAdjust="spacingAndGlyphs">Attending live (work isn't paying for this): $38 USD</text>
<text x="934.500" y="94" textLength="66" lengthAdjust="spacingAndGlyphs">Video recording only: $5 USD</text>
<text x="934.500" y="116" textLength="54" lengthAdjust="spacingAndGlyphs">1pm – 4pm Eastern USA</text>
</g>
<!-- right portrait -->
<clipPath id="rp"><rect x="934" y="126" width="58.500" height="101" rx="8"/></clipPath>
<ellipse cx="963" cy="227" rx="29" ry="1.500" fill="#ddd"/>
<g clip-path="url(#rp)">
<rect x="934" y="126" width="59" height="101" fill="#dcdcdc"/>
<path d="M941 165c-1-18 4-38 24-39 14 0 24 10 22 30l-4 8-2-18-14-6-14 5-5 20z" fill="#b42a52"/>
<path d="M934 158c4-3 8-3 12-2l4 14 4 20 6 16 4 21h-30z" fill="#e8741f"/>
<path d="M938 172l5 30M947 176l8 34M936 196l6 22" stroke="#f49a35" stroke-width="2.500" fill="none"/>
<path d="M982 165l6 6 2 16-4 12-12 2 6-18z" fill="#e8741f"/>
<ellipse cx="968" cy="164" rx="15" ry="18" fill="#dfb3a2"/>
<path d="M955 152c5-6 20-8 28-1l2 10-6-8-14-1-9 8z" fill="#a92a55"/>
<rect x="953" y="155" width="13" height="9" rx="2.500" fill="#a88880" stroke="#333" stroke-width="1.300"/>
<rect x="970" y="154" width="13" height="9" rx="2.500" fill="#a88880" stroke="#333" stroke-width="1.300"/>
<rect x="966" y="157" width="4" height="1" fill="#333"/>
<ellipse cx="968" cy="173" rx="5" ry="1.800" fill="#b86a66"/>
<path d="M961 181h14l1 12-8 28-6-24z" fill="#e2b79c"/>
<path d="M976 192l16-8v43h-24z" fill="#1a1d28"/>
<path d="M934 215l12-2 10 14h-22z" fill="#1a1d28"/>
<path d="M960 205l8 22h-6z" fill="#1a1d28"/>
</g>
<!-- accordion -->
<rect x="1007.500" y="110.500" width="204.500" height="19" rx="5" fill="#f4f4f4" stroke="#cfcfcf" stroke-width=".8"/>
<text class="s" x="1013.500" y="122.500" font-size="6.800" font-weight="700" fill="#8c8c8c" textLength="53" lengthAdjust="spacingAndGlyphs">Stéphanie Walter</text>
<circle cx="1203" cy="120" r="3.800" fill="#2f5b9b"/><rect x="1201" y="119.600" width="4" height=".8" fill="#dde"/>
<rect x="1007.500" y="137" width="204.500" height="204" rx="5" fill="#fff" stroke="#d8d8d8" stroke-width=".8"/>
<g class="s" font-size="5.900" font-weight="700" fill="#3b3f42">
<text x="1013.500" y="149" textLength="155" lengthAdjust="spacingAndGlyphs">Information Architecture - How to Design Adaptive</text>
<text x="1013.500" y="155.500" textLength="122" lengthAdjust="spacingAndGlyphs">Components and Pages (3-hr workshop)</text>
</g>
<g class="s" font-size="4.900" fill="#4a4a4a">
<text x="1013.500" y="168" textLength="193" lengthAdjust="spacingAndGlyphs">How do you build reusable components that can adapt to different layouts, design and</text>
<text x="1013.500" y="176.500" textLength="189" lengthAdjust="spacingAndGlyphs">needs? You start by understanding your users’ needs regarding the content of the site.</text>
<text x="1013.500" y="185" textLength="190" lengthAdjust="spacingAndGlyphs">And then, you use this to build a strong information architecture to provide them with</text>
<text x="1013.500" y="193.500" textLength="179" lengthAdjust="spacingAndGlyphs">what they need to accomplish their goal. In this workshop I teach you my adaptive</text>
<text x="1013.500" y="202" textLength="190" lengthAdjust="spacingAndGlyphs">step by step framework to help you build your own pages and components, from user</text>
<text x="1013.500" y="210.500" textLength="72" lengthAdjust="spacingAndGlyphs">needs to low fidelity wireframes.</text>
<text x="1013.500" y="219" textLength="173" lengthAdjust="spacingAndGlyphs">This workshop will go through: user flow, creation of a content model, content</text>
<text x="1013.500" y="227.500" textLength="181" lengthAdjust="spacingAndGlyphs">prioritization based on user needs, list/detail pattern identification, creation of low</text>
<text x="1013.500" y="235.500" textLength="187" lengthAdjust="spacingAndGlyphs">fidelity wireframes for pages and reusable components. Bonus: we will also see how</text>
<text x="1013.500" y="244" textLength="186" lengthAdjust="spacingAndGlyphs">the techniques in the workshop can be used to help you design responsive sites and</text>
<text x="1013.500" y="252.500" textLength="109" lengthAdjust="spacingAndGlyphs">prioritize content across different screens as well.</text>
<text x="1013.500" y="261" textLength="187" lengthAdjust="spacingAndGlyphs">We will work in groups on small information architecture exercises on my Miro board</text>
<text x="1013.500" y="269.500" textLength="185" lengthAdjust="spacingAndGlyphs">template. An empty version of that template will be available after the workshop so</text>
<text x="1013.500" y="278" textLength="173" lengthAdjust="spacingAndGlyphs">that you can do the same exercise on your own content. No prior knowledge is</text>
<text x="1013.500" y="286" textLength="182" lengthAdjust="spacingAndGlyphs">required. But some basic knowledge on user research and information architecture</text>
<text x="1013.500" y="294.500" textLength="177" lengthAdjust="spacingAndGlyphs">will help. Please note that we won’t enter into the details on how to conduct the</text>
<text x="1013.500" y="303" textLength="37" lengthAdjust="spacingAndGlyphs">research though.</text>
<text x="1013.500" y="316.500" textLength="184" lengthAdjust="spacingAndGlyphs">The workshop is using Miro boards and sadly those are not accessible yet to screen</text>
<text x="1013.500" y="325" textLength="188" lengthAdjust="spacingAndGlyphs">readers by default. But please let us know if you have any accessibility needs and we</text>
<text x="1013.500" y="333.500" textLength="179" lengthAdjust="spacingAndGlyphs">will try to do our best to find a solution to accommodate them as best as we can.</text>
</g>
<rect x="1007.500" y="349.500" width="204.500" height="19" rx="5" fill="#f4f4f4" stroke="#cfcfcf" stroke-width=".8"/>
<text class="s" x="1013.500" y="361.500" font-size="6.800" font-weight="700" fill="#8c8c8c" textLength="36" lengthAdjust="spacingAndGlyphs">Speaker Bio</text>
<circle cx="1203" cy="359.500" r="3.800" fill="#2f5b9b"/><rect x="1201" y="359.100" width="4" height=".8" fill="#dde"/>
<rect x="934" y="382.500" width="278" height="2" fill="#5e8c7e"/>
<rect x="1234" y="358" width="12.500" height="13" fill="#9c9c9c"/>
<path d="M1237.500 366l2.500-2.500 2.500 2.500" fill="none" stroke="#d8d8d8" stroke-width=".9"/>
</svg>
</body></html>
